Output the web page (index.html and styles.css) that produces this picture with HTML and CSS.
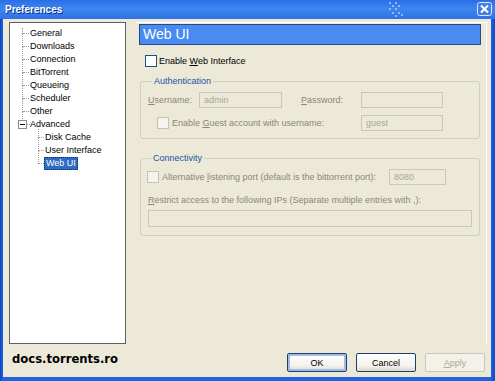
FILE: index.html
```html
<!DOCTYPE html>
<html lang="en">
<head>
    <meta charset="UTF-8">
    <meta name="viewport" content="width=device-width, initial-scale=1.0">
    <title>Preferences</title>
    <link rel="stylesheet" href="styles.css">
</head>
<body>
    <div class="window">
        <div class="titlebar">
            <span class="title">Preferences</span>
            <svg class="grip" width="20" height="18" viewBox="0 0 20 18">
                <g fill="#8fb8f7">
                    <rect x="2" y="1" width="2" height="2"/><rect x="8" y="1" width="2" height="2"/>
                    <rect x="5" y="4" width="2" height="2"/><rect x="11" y="4" width="2" height="2"/>
                    <rect x="2" y="7" width="2" height="2"/><rect x="8" y="7" width="2" height="2"/>
                    <rect x="5" y="11" width="2" height="2"/><rect x="11" y="11" width="2" height="2"/>
                    <rect x="14" y="13" width="2" height="2"/><rect x="8" y="14" width="2" height="2"/>
                </g>
            </svg>
            <span class="close">
                <svg width="15" height="14" viewBox="0 0 15 14">
                    <rect x="0.5" y="0.5" width="14" height="13" rx="2" fill="#3f7fe6" stroke="#dbe8fb"/>
                    <path d="M4 3.5 L11 10.5 M11 3.5 L4 10.5" stroke="#fff" stroke-width="2"/>
                </svg>
            </span>
        </div>

        <div class="body">
            <div class="tree">
                <ul class="level1">
                    <li><span>General</span></li>
                    <li><span>Downloads</span></li>
                    <li><span>Connection</span></li>
                    <li><span>BitTorrent</span></li>
                    <li><span>Queueing</span></li>
                    <li><span>Scheduler</span></li>
                    <li><span>Other</span></li>
                    <li class="open">
                        <span class="toggle"></span><span>Advanced</span>
                        <ul class="level2">
                            <li><span>Disk Cache</span></li>
                            <li><span>User Interface</span></li>
                            <li class="selected"><span class="sel-text">Web UI</span></li>
                        </ul>
                    </li>
                </ul>
            </div>

            <div class="panel">
                <div class="panel-title">Web UI</div>

                <label class="check-row">
                    <span class="box"></span>
                    <span>Enable <u>W</u>eb Interface</span>
                </label>

                <fieldset class="group auth">
                    <legend>Authentication</legend>
                    <span class="lbl"><u>U</u>sername:</span>
                    <span class="field">admin</span>
                    <span></span>
                    <span class="lbl"><u>P</u>assword:</span>
                    <span class="field"></span>
                    <span class="guest">
                        <span class="box disabled"></span>
                        <span>Enable <u>G</u>uest account with username:</span>
                    </span>
                    <span class="field">guest</span>
                </fieldset>

                <fieldset class="group conn">
                    <legend>Connectivity</legend>
                    <div class="port-row">
                        <span class="box disabled"></span>
                        <span class="port-text">Alternative <u>l</u>istening port (default is the bittorrent port):</span>
                        <span class="field port">8080</span>
                    </div>
                    <div class="lbl restrict"><u>R</u>estrict access to the following IPs (Separate multiple entries with ,):</div>
                    <div class="field wide"></div>
                </fieldset>
            </div>

            <div class="brand">docs.torrents.ro</div>

            <div class="buttons">
                <button class="default">OK</button>
                <button>Cancel</button>
                <button disabled><u>A</u>pply</button>
            </div>
        </div>
    </div>
</body>
</html>
```

FILE: styles.css
```css
body {
    margin: 0;
    font-family: "Liberation Sans", Arial, sans-serif;
    font-size: 9px;
    color: #000000;
}
.window {
    width: 495px;
    height: 381px;
    display: flex;
    flex-direction: column;
    background: linear-gradient(to right, #0842c4, #2163e0 3px, #2163e0 491px, #0b45c4);
}
.titlebar {
    height: 19px;
    display: flex;
    align-items: center;
    padding: 0 3px 0 5px;
    background: linear-gradient(#2a6ee6, #3d86f1 45%, #2e72e6);
}
.title {
    color: #ffffff;
    font-weight: bold;
    font-size: 10px;
    text-shadow: 1px 1px #0a2f8a;
    flex: 1;
}
.grip {
    margin-right: 70px;
}
.close {
    display: flex;
    margin-top: -2px;
}

.body {
    flex: 1;
    margin: 0 4px 4px 3px;
    background-color: #ece9d8;
    display: grid;
    grid-template-columns: 117px 351px;
    grid-template-rows: 322px 1fr;
    column-gap: 10px;
    padding: 3px 0 0 6px;
}

/* tree */
.tree {
    background-color: #ffffff;
    border: 1px solid #5f5f5f;
    position: relative;
}
.tree ul {
    list-style: none;
    margin: 0;
    padding: 0;
}
.level1 {
    padding-top: 4px !important;
}
.tree li {
    position: relative;
    line-height: 13px;
    padding-left: 20px;
}
.level2 li {
    padding-left: 15px;
}
.level2 {
    margin-left: -20px !important;
    padding-left: 20px !important;
}
.tree li::before {
    content: "";
    position: absolute;
    left: 12px;
    top: -6px;
    height: 13px;
    border-left: 1px dotted #9a9a9a;
}
.tree li::after {
    content: "";
    position: absolute;
    left: 13px;
    top: 6px;
    width: 6px;
    border-top: 1px dotted #9a9a9a;
}
.level1 > li:first-child::before {
    top: 1px;
    height: 6px;
}
.level2 li::before {
    left: 8px;
}
.level2 li::after {
    left: 9px;
    width: 5px;
}
.level2 li:first-child::before {
    top: -2px;
    height: 9px;
}
.toggle {
    position: absolute;
    left: 8px;
    top: 2px;
    width: 7px;
    height: 7px;
    border: 1px solid #8c8c8c;
    background: #ffffff;
    z-index: 1;
}
.toggle::after {
    content: "";
    position: absolute;
    left: 1px;
    top: 3px;
    width: 5px;
    border-top: 1px solid #000;
}
.open::after {
    width: 4px !important;
    left: 16px !important;
}
.sel-text {
    display: inline-block;
    line-height: 11px;
    padding: 0 1px;
    margin-left: -1px;
    background-color: #316ac5;
    color: #ffffff;
    border: 1px dotted #10306a;
}

/* right panel */
.panel {
    border-top: 1px solid #ffffff;
    border-right: 1px solid #ffffff;
    padding: 0 0 0 3px;
}
.panel-title {
    margin-top: 1px;
    width: 337px;
    height: 19px;
    line-height: 19px;
    padding-left: 3px;
    background-color: #4a8bf2;
    border: 1px solid #27488a;
    color: #ffffff;
    font-size: 14px;
}
.check-row {
    display: flex;
    align-items: center;
    gap: 2px;
    margin: 10px 0 0 6px;
    height: 12px;
}
.box {
    width: 10px;
    height: 10px;
    border: 1px solid #1c5180;
    background-color: #ffffff;
    flex: none;
}
.box.disabled {
    border-color: #c5c2b2;
    background-color: #f4f3ee;
}

.group {
    margin: 0;
    margin-left: 1px;
    width: 340px;
    box-sizing: border-box;
    border: 1px solid #d0d0bf;
    border-radius: 3px;
    color: #8a8778;
}
.group legend {
    color: #2151a8;
    line-height: 11px;
    padding: 0 2px;
    margin-left: 4px;
}
.auth {
    margin-top: 9px;
    padding: 5px 0 7px 7px;
    display: grid;
    grid-template-columns: 51px 83px 19px 60px 82px;
    grid-template-rows: 16px 16px;
    row-gap: 7px;
    align-items: center;
}
.field {
    box-sizing: border-box;
    height: 16px;
    line-height: 14px;
    border: 1px solid #c9c7ba;
    background-color: #ece9d8;
    color: #a8a698;
    padding-left: 4px;
}
.guest {
    grid-column: 1 / 5;
    display: flex;
    align-items: center;
    gap: 3px;
    padding-left: 9px;
}
.conn {
    margin-top: 14px;
    padding: 5px 0 8px 6px;
}
.port-row {
    display: flex;
    align-items: center;
    height: 16px;
}
.port-text {
    margin-left: 3px;
    width: 227px;
}
.field.port {
    width: 57px;
}
.restrict {
    margin: 10px 0 0 1px;
    line-height: 11px;
}
.field.wide {
    width: 324px;
    height: 17px;
    margin: 4px 0 0 1px;
}

/* bottom row */
.brand {
    font-family: "DejaVu Sans", Verdana, sans-serif;
    font-weight: bold;
    font-size: 11.6px;
    margin: 8px 0 0 3px;
}
.buttons {
    display: flex;
    justify-content: flex-end;
    gap: 9px;
    padding: 9px 2px 0 0;
    align-items: flex-start;
}
button {
    width: 60px;
    height: 19px;
    font-family: "Liberation Sans", Arial, sans-serif;
    font-size: 9px;
    border: 1px solid #1e3f6e;
    border-radius: 2px;
    background: linear-gradient(#ffffff, #f3f2ec 70%, #dcd9cc);
    color: #000000;
    padding: 0;
}
button.default {
    box-shadow: inset 0 0 0 2px #9fbce8;
}
button:disabled {
    border-color: #c9c7ba;
    background: #f2f1ea;
    color: #aca899;
}
```
